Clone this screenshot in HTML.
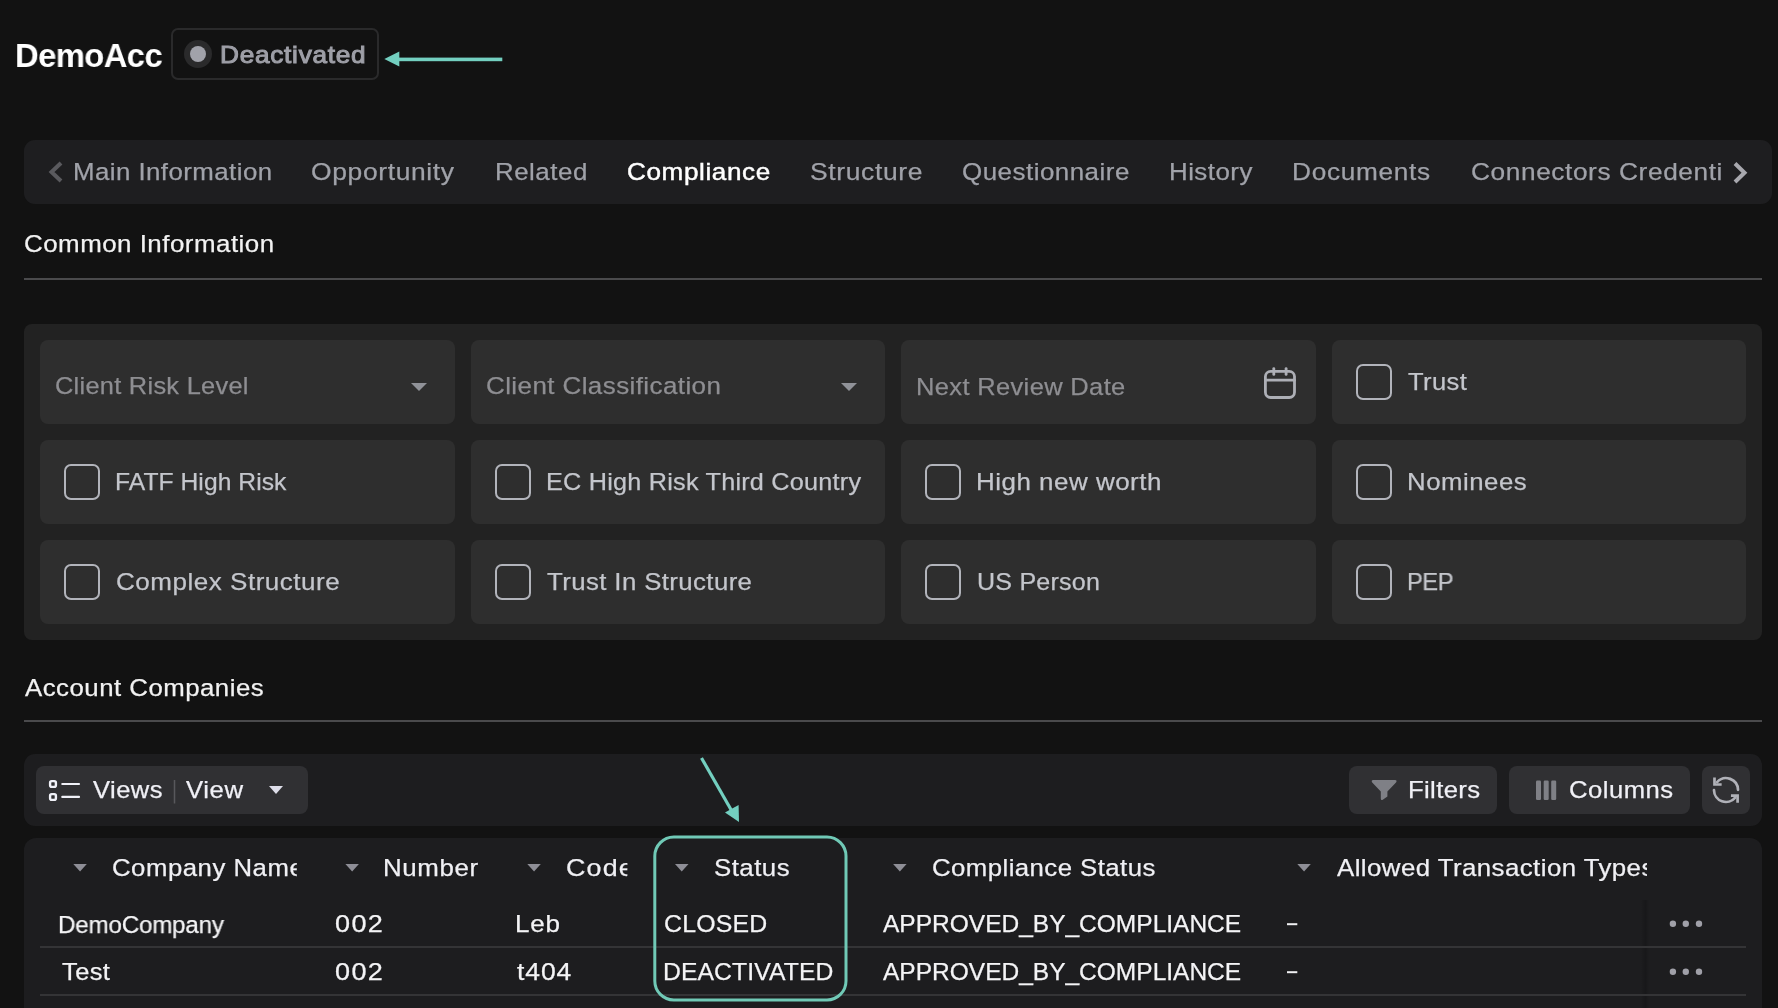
<!DOCTYPE html>
<html><head><meta charset="utf-8"><style>
html,body{margin:0;padding:0;}
body{width:1778px;height:1008px;overflow:hidden;background:#121212;position:relative;font-family:"Liberation Sans", sans-serif;}
.b{position:absolute;}
.t{position:absolute;white-space:nowrap;line-height:1;will-change:transform;transform-origin:0 0;}
</style></head><body>
<div class="b" style="left:170.5px;top:28px;width:208.5px;height:52px;background:transparent;border-radius:7px;border:2px solid #2a2a2b;box-sizing:border-box"></div><div class="b" style="left:184px;top:40px;width:28px;height:28px;border-radius:50%;background:#2a2a2b"></div><div class="b" style="left:190px;top:46px;width:16px;height:16px;border-radius:50%;background:#a1a2aa"></div><svg class="b" style="left:0;top:0" width="1778" height="1008"><g fill="#73cfc0" stroke="none"><polygon points="384.3,59 399.3,51.4 399.3,66.6"/><rect x="398" y="57.6" width="104.3" height="3.6"/></g></svg><div class="b" style="left:24px;top:140px;width:1748px;height:64px;background:#1e1e20;border-radius:11px;"></div><svg class="b" style="left:0;top:0" width="1778" height="1008"><g fill="none" stroke-width="3.2" stroke-linecap="butt"><polyline points="61,163 51.5,172 61,181" stroke="#5a5a5e" stroke-width="4"/><polyline points="1735,163.5 1744.5,172.7 1735,182" stroke="#a8a8ae" stroke-width="4"/></g></svg><div class="b" style="left:24px;top:278px;width:1738px;height:2px;background:#4a4a4c;border-radius:0px;"></div><div class="b" style="left:24px;top:720px;width:1738px;height:2px;background:#4a4a4c;border-radius:0px;"></div><div class="b" style="left:24px;top:324px;width:1738px;height:316px;background:#222222;border-radius:8px;"></div><div class="b" style="left:40px;top:340px;width:414.5px;height:84px;background:#2e2e2e;border-radius:8px;"></div><div class="b" style="left:470.5px;top:340px;width:414.5px;height:84px;background:#2e2e2e;border-radius:8px;"></div><div class="b" style="left:901px;top:340px;width:414.5px;height:84px;background:#2e2e2e;border-radius:8px;"></div><div class="b" style="left:1331.5px;top:340px;width:414.5px;height:84px;background:#2e2e2e;border-radius:8px;"></div><div class="b" style="left:40px;top:440px;width:414.5px;height:84px;background:#2e2e2e;border-radius:8px;"></div><div class="b" style="left:470.5px;top:440px;width:414.5px;height:84px;background:#2e2e2e;border-radius:8px;"></div><div class="b" style="left:901px;top:440px;width:414.5px;height:84px;background:#2e2e2e;border-radius:8px;"></div><div class="b" style="left:1331.5px;top:440px;width:414.5px;height:84px;background:#2e2e2e;border-radius:8px;"></div><div class="b" style="left:40px;top:540px;width:414.5px;height:84px;background:#2e2e2e;border-radius:8px;"></div><div class="b" style="left:470.5px;top:540px;width:414.5px;height:84px;background:#2e2e2e;border-radius:8px;"></div><div class="b" style="left:901px;top:540px;width:414.5px;height:84px;background:#2e2e2e;border-radius:8px;"></div><div class="b" style="left:1331.5px;top:540px;width:414.5px;height:84px;background:#2e2e2e;border-radius:8px;"></div><svg class="b" style="left:411px;top:383px" width="16" height="8"><polygon points="0,0 16,0 8,8" fill="#909298"/></svg><svg class="b" style="left:841px;top:383px" width="16" height="8"><polygon points="0,0 16,0 8,8" fill="#909298"/></svg><svg class="b" style="left:0;top:0" width="1778" height="1008"><g fill="none" stroke="#adafb6" stroke-width="2.8" stroke-linecap="round"><rect x="1265.4" y="371.4" width="29.1" height="26.1" rx="5.2"/><line x1="1265.4" y1="380.2" x2="1294.5" y2="380.2"/><line x1="1273.8" y1="368.6" x2="1273.8" y2="374.4"/><line x1="1286.1" y1="368.6" x2="1286.1" y2="374.4"/></g></svg><div class="b" style="left:1356px;top:364px;width:36px;height:36px;border:2px solid #b2b4bb;border-radius:7px;box-sizing:border-box"></div><div class="b" style="left:64px;top:464px;width:36px;height:36px;border:2px solid #b2b4bb;border-radius:7px;box-sizing:border-box"></div><div class="b" style="left:495px;top:464px;width:36px;height:36px;border:2px solid #b2b4bb;border-radius:7px;box-sizing:border-box"></div><div class="b" style="left:925px;top:464px;width:36px;height:36px;border:2px solid #b2b4bb;border-radius:7px;box-sizing:border-box"></div><div class="b" style="left:1356px;top:464px;width:36px;height:36px;border:2px solid #b2b4bb;border-radius:7px;box-sizing:border-box"></div><div class="b" style="left:64px;top:564px;width:36px;height:36px;border:2px solid #b2b4bb;border-radius:7px;box-sizing:border-box"></div><div class="b" style="left:495px;top:564px;width:36px;height:36px;border:2px solid #b2b4bb;border-radius:7px;box-sizing:border-box"></div><div class="b" style="left:925px;top:564px;width:36px;height:36px;border:2px solid #b2b4bb;border-radius:7px;box-sizing:border-box"></div><div class="b" style="left:1356px;top:564px;width:36px;height:36px;border:2px solid #b2b4bb;border-radius:7px;box-sizing:border-box"></div><div class="b" style="left:24px;top:754px;width:1738px;height:72px;background:#1d1d1f;border-radius:11px;"></div><div class="b" style="left:36px;top:766px;width:272px;height:48px;background:#303033;border-radius:8px;"></div><div class="b" style="left:1349px;top:766px;width:148px;height:48px;background:#303033;border-radius:8px;"></div><div class="b" style="left:1509px;top:766px;width:181px;height:48px;background:#303033;border-radius:8px;"></div><div class="b" style="left:1702px;top:766px;width:48px;height:48px;background:#303033;border-radius:8px;"></div><svg class="b" style="left:0;top:0" width="1778" height="1008"><g fill="none" stroke="#f0f1f8" stroke-width="2"><rect x="50.1" y="781.1" width="5.8" height="5.8" rx="1.6" stroke-width="2.4"/><rect x="50.1" y="794.1" width="5.8" height="5.8" rx="1.6" stroke-width="2.4"/><line x1="62.3" y1="784" x2="79" y2="784" stroke-width="2.2" stroke-linecap="round"/><line x1="62.3" y1="796.9" x2="79" y2="796.9" stroke-width="2.2" stroke-linecap="round"/></g><line x1="174.5" y1="780" x2="174.5" y2="803.5" stroke="#58585c" stroke-width="1.5"/><polygon points="269,786 283,786 276,794" fill="#dedeea"/><path d="M1373.2,780 L1395,780 Q1397.5,780.3 1396,782.6 L1387.4,791.6 L1387.4,796.6 L1382.8,799.8 Q1380.8,800.8 1380.8,798.6 L1380.8,791.6 L1372.2,782.6 Q1370.8,780.3 1373.2,780 Z" fill="#7f8086"/><g fill="#7f8086"><rect x="1536" y="780.5" width="5" height="19.5" rx="1.2"/><rect x="1543.7" y="780.5" width="5" height="19.5" rx="1.2"/><rect x="1551.2" y="780.5" width="5" height="19.5" rx="1.2"/></g><g fill="none" stroke="#b0b1b8" stroke-width="2.7" stroke-linejoin="miter"><path d="M1738,789.8 A12,12 0 0 0 1717.1,782.1" stroke-linecap="round"/><path d="M1714,790.2 A12,12 0 0 0 1735.2,797.7" stroke-linecap="round"/><path d="M1714.5,778.8 V784.5 H1720.3" stroke-linecap="square"/><path d="M1732.3,795.6 H1737.6 V801.3" stroke-linecap="square"/></g></svg><div class="b" style="left:24px;top:838px;width:1738px;height:202px;background:#1d1d1f;border-radius:12px;"></div><div class="b" style="left:1641px;top:900px;width:8px;height:108px;background:linear-gradient(90deg,rgba(0,0,0,0) 0%,rgba(0,0,0,0.18) 55%,rgba(0,0,0,0) 100%)"></div><div class="b" style="left:40px;top:946px;width:1706px;height:2px;background:#343436;border-radius:0px;"></div><div class="b" style="left:40px;top:994px;width:1706px;height:2px;background:#343436;border-radius:0px;"></div><svg class="b" style="left:0;top:0" width="1778" height="1008"><polygon points="73.3,864 86.8,864 80.05,871.5" fill="#8e8e96"/><polygon points="345.4,864 358.9,864 352.15,871.5" fill="#8e8e96"/><polygon points="527.3,864 540.8,864 534.05,871.5" fill="#8e8e96"/><polygon points="675,864 688.5,864 681.75,871.5" fill="#8e8e96"/><polygon points="893.1,864 906.6,864 899.85,871.5" fill="#8e8e96"/><polygon points="1297.3,864 1310.8,864 1304.05,871.5" fill="#8e8e96"/><circle cx="1672.9" cy="923.8" r="3.2" fill="#a0a0a8"/><circle cx="1685.8" cy="923.8" r="3.2" fill="#a0a0a8"/><circle cx="1699" cy="923.8" r="3.2" fill="#a0a0a8"/><circle cx="1672.9" cy="971.7" r="3.2" fill="#a0a0a8"/><circle cx="1685.8" cy="971.7" r="3.2" fill="#a0a0a8"/><circle cx="1699" cy="971.7" r="3.2" fill="#a0a0a8"/><rect x="1287" y="923.2" width="10.3" height="2" fill="#f0f0f2"/><rect x="1287" y="971.2" width="10.3" height="2" fill="#f0f0f2"/></svg>
<div class="t" style="left:14.67px;top:38.42px;font-size:34px;font-weight:700;color:#ffffff;letter-spacing:-0.631px;transform:scaleX(0.9644)">DemoAcc</div><div class="t" style="left:220.31px;top:43.18px;font-size:24px;font-weight:400;color:#9e9fa7;letter-spacing:0.686px;transform:scaleX(1.0902);-webkit-text-stroke:1.0px #9e9fa7">Deactivated</div><div class="t" style="left:72.99px;top:160.26px;font-size:24.5px;font-weight:400;color:#a0a2a9;letter-spacing:0.416px;transform:scaleX(1.0549);-webkit-text-stroke:0.25px #a0a2a9">Main Information</div><div class="t" style="left:311.12px;top:160.26px;font-size:24.5px;font-weight:400;color:#a0a2a9;letter-spacing:0.609px;transform:scaleX(1.0778);-webkit-text-stroke:0.25px #a0a2a9">Opportunity</div><div class="t" style="left:494.99px;top:160.26px;font-size:24.5px;font-weight:400;color:#a0a2a9;letter-spacing:0.485px;transform:scaleX(1.0563);-webkit-text-stroke:0.25px #a0a2a9">Related</div><div class="t" style="left:627.24px;top:160.26px;font-size:24.5px;font-weight:400;color:#ffffff;letter-spacing:0.574px;transform:scaleX(1.0646);-webkit-text-stroke:0.45px #ffffff">Compliance</div><div class="t" style="left:810.12px;top:160.26px;font-size:24.5px;font-weight:400;color:#a0a2a9;letter-spacing:0.599px;transform:scaleX(1.0793);-webkit-text-stroke:0.25px #a0a2a9">Structure</div><div class="t" style="left:962.24px;top:160.26px;font-size:24.5px;font-weight:400;color:#a0a2a9;letter-spacing:0.463px;transform:scaleX(1.0584);-webkit-text-stroke:0.25px #a0a2a9">Questionnaire</div><div class="t" style="left:1168.89px;top:160.26px;font-size:24.5px;font-weight:400;color:#a0a2a9;letter-spacing:0.443px;transform:scaleX(1.0562);-webkit-text-stroke:0.25px #a0a2a9">History</div><div class="t" style="left:1292.46px;top:160.26px;font-size:24.5px;font-weight:400;color:#a0a2a9;letter-spacing:0.661px;transform:scaleX(1.0697);-webkit-text-stroke:0.25px #a0a2a9">Documents</div><div class="t" style="left:1471.33px;top:160.26px;font-size:24.5px;font-weight:400;color:#a0a2a9;letter-spacing:0.550px;transform:scaleX(1.0717);-webkit-text-stroke:0.25px #a0a2a9">Connectors Credenti</div><div class="t" style="left:23.64px;top:232.26px;font-size:24.5px;font-weight:400;color:#f2f2f2;letter-spacing:0.474px;transform:scaleX(1.0562);-webkit-text-stroke:0.25px #f2f2f2">Common Information</div><div class="t" style="left:25.10px;top:676.26px;font-size:24.5px;font-weight:400;color:#f2f2f2;letter-spacing:0.460px;transform:scaleX(1.0531);-webkit-text-stroke:0.25px #f2f2f2">Account Companies</div><div class="t" style="left:55.46px;top:374.26px;font-size:24.5px;font-weight:400;color:#8e8e92;letter-spacing:0.263px;transform:scaleX(1.0363);-webkit-text-stroke:0.25px #8e8e92">Client Risk Level</div><div class="t" style="left:486.14px;top:374.26px;font-size:24.5px;font-weight:400;color:#8e8e92;letter-spacing:0.397px;transform:scaleX(1.0595);-webkit-text-stroke:0.25px #8e8e92">Client Classification</div><div class="t" style="left:916.32px;top:375.26px;font-size:24.5px;font-weight:400;color:#8e8e92;letter-spacing:0.335px;transform:scaleX(1.0405);-webkit-text-stroke:0.25px #8e8e92">Next Review Date</div><div class="t" style="left:1408.00px;top:370.26px;font-size:24.5px;font-weight:400;color:#c4c6cc;letter-spacing:0.375px;transform:scaleX(1.0426);-webkit-text-stroke:0.25px #c4c6cc">Trust</div><div class="t" style="left:115.49px;top:470.26px;font-size:24.5px;font-weight:400;color:#c4c6cc;letter-spacing:0.050px;transform:scaleX(1.0059);-webkit-text-stroke:0.25px #c4c6cc">FATF High Risk</div><div class="t" style="left:545.94px;top:470.26px;font-size:24.5px;font-weight:400;color:#c4c6cc;letter-spacing:0.226px;transform:scaleX(1.0292);-webkit-text-stroke:0.25px #c4c6cc">EC High Risk Third Country</div><div class="t" style="left:976.28px;top:470.26px;font-size:24.5px;font-weight:400;color:#c4c6cc;letter-spacing:0.476px;transform:scaleX(1.0591);-webkit-text-stroke:0.25px #c4c6cc">High new worth</div><div class="t" style="left:1406.60px;top:470.26px;font-size:24.5px;font-weight:400;color:#c4c6cc;letter-spacing:0.503px;transform:scaleX(1.0514);-webkit-text-stroke:0.25px #c4c6cc">Nominees</div><div class="t" style="left:115.74px;top:570.26px;font-size:24.5px;font-weight:400;color:#c4c6cc;letter-spacing:0.488px;transform:scaleX(1.0619);-webkit-text-stroke:0.25px #c4c6cc">Complex Structure</div><div class="t" style="left:547.30px;top:570.26px;font-size:24.5px;font-weight:400;color:#c4c6cc;letter-spacing:0.371px;transform:scaleX(1.0530);-webkit-text-stroke:0.25px #c4c6cc">Trust In Structure</div><div class="t" style="left:977.38px;top:570.26px;font-size:24.5px;font-weight:400;color:#c4c6cc;letter-spacing:0.213px;transform:scaleX(1.0224);-webkit-text-stroke:0.25px #c4c6cc">US Person</div><div class="t" style="left:1407.16px;top:570.26px;font-size:24.5px;font-weight:400;color:#c4c6cc;letter-spacing:-0.513px;transform:scaleX(0.9681);-webkit-text-stroke:0.25px #c4c6cc">PEP</div><div class="t" style="left:92.90px;top:778.26px;font-size:24.5px;font-weight:400;color:#f0f0f6;letter-spacing:0.445px;transform:scaleX(1.0430);-webkit-text-stroke:0.25px #f0f0f6">Views</div><div class="t" style="left:186.20px;top:778.26px;font-size:24.5px;font-weight:400;color:#f0f0f6;letter-spacing:0.563px;transform:scaleX(1.0502);-webkit-text-stroke:0.25px #f0f0f6">View</div><div class="t" style="left:1408.00px;top:778.26px;font-size:24.5px;font-weight:400;color:#f0f0f6;letter-spacing:0.334px;transform:scaleX(1.0489);-webkit-text-stroke:0.25px #f0f0f6">Filters</div><div class="t" style="left:1568.65px;top:778.26px;font-size:24.5px;font-weight:400;color:#f0f0f6;letter-spacing:0.470px;transform:scaleX(1.0464);-webkit-text-stroke:0.25px #f0f0f6">Columns</div><div class="t" style="left:111.85px;top:856.26px;font-size:24.5px;font-weight:400;color:#f0f0f4;letter-spacing:0.506px;transform:scaleX(1.0500);-webkit-text-stroke:0.25px #f0f0f4;width:175.86px;overflow:hidden">Company Name</div><div class="t" style="left:382.89px;top:856.26px;font-size:24.5px;font-weight:400;color:#f0f0f4;letter-spacing:0.593px;transform:scaleX(1.0552);-webkit-text-stroke:0.25px #f0f0f4">Number</div><div class="t" style="left:565.70px;top:856.26px;font-size:24.5px;font-weight:400;color:#f0f0f4;letter-spacing:1.102px;transform:scaleX(1.0954);-webkit-text-stroke:0.25px #f0f0f4;width:55.50px;overflow:hidden">Code</div><div class="t" style="left:713.95px;top:856.26px;font-size:24.5px;font-weight:400;color:#f0f0f4;letter-spacing:0.463px;transform:scaleX(1.0536);-webkit-text-stroke:0.25px #f0f0f4">Status</div><div class="t" style="left:931.95px;top:856.26px;font-size:24.5px;font-weight:400;color:#f0f0f4;letter-spacing:0.419px;transform:scaleX(1.0517);-webkit-text-stroke:0.25px #f0f0f4">Compliance Status</div><div class="t" style="left:1337.10px;top:856.26px;font-size:24.5px;font-weight:400;color:#f0f0f4;letter-spacing:0.417px;transform:scaleX(1.0543);-webkit-text-stroke:0.25px #f0f0f4;width:293.95px;overflow:hidden">Allowed Transaction Types</div><div class="t" style="left:58.03px;top:913.26px;font-size:24.5px;font-weight:400;color:#f4f4f6;letter-spacing:-0.173px;transform:scaleX(0.9849);-webkit-text-stroke:0.25px #f4f4f6">DemoCompany</div><div class="t" style="left:335.00px;top:912.26px;font-size:24.5px;font-weight:400;color:#f4f4f6;letter-spacing:1.259px;transform:scaleX(1.1036);-webkit-text-stroke:0.25px #f4f4f6">002</div><div class="t" style="left:514.88px;top:912.26px;font-size:24.5px;font-weight:400;color:#f4f4f6;letter-spacing:0.726px;transform:scaleX(1.0604);-webkit-text-stroke:0.25px #f4f4f6">Leb</div><div class="t" style="left:663.99px;top:912.26px;font-size:24.5px;font-weight:400;color:#f4f4f6;letter-spacing:0.185px;transform:scaleX(1.0142);-webkit-text-stroke:0.25px #f4f4f6">CLOSED</div><div class="t" style="left:883.30px;top:912.26px;font-size:24.5px;font-weight:400;color:#f4f4f6;letter-spacing:0.001px;transform:scaleX(1.0001);-webkit-text-stroke:0.25px #f4f4f6">APPROVED_BY_COMPLIANCE</div><div class="t" style="left:62.30px;top:960.06px;font-size:24.5px;font-weight:400;color:#f4f4f6;letter-spacing:0.381px;transform:scaleX(1.0395);-webkit-text-stroke:0.25px #f4f4f6">Test</div><div class="t" style="left:335.00px;top:960.26px;font-size:24.5px;font-weight:400;color:#f4f4f6;letter-spacing:1.259px;transform:scaleX(1.1036);-webkit-text-stroke:0.25px #f4f4f6">002</div><div class="t" style="left:517.00px;top:960.26px;font-size:24.5px;font-weight:400;color:#f4f4f6;letter-spacing:0.805px;transform:scaleX(1.0834);-webkit-text-stroke:0.25px #f4f4f6">t404</div><div class="t" style="left:662.98px;top:960.26px;font-size:24.5px;font-weight:400;color:#f4f4f6;letter-spacing:0.095px;transform:scaleX(1.0087);-webkit-text-stroke:0.25px #f4f4f6">DEACTIVATED</div><div class="t" style="left:883.30px;top:960.26px;font-size:24.5px;font-weight:400;color:#f4f4f6;letter-spacing:0.001px;transform:scaleX(1.0001);-webkit-text-stroke:0.25px #f4f4f6">APPROVED_BY_COMPLIANCE</div>
<svg class="b" style="left:0;top:0" width="1778" height="1008"><rect x="654.8" y="837" width="191.2" height="163" rx="19" fill="none" stroke="#70c9b6" stroke-width="3"/><line x1="701.5" y1="758" x2="733.5" y2="814" stroke="#73cfc0" stroke-width="3.2"/><polygon points="739,822 725,812.4 738.6,805" fill="#73cfc0"/></svg>
</body></html>
